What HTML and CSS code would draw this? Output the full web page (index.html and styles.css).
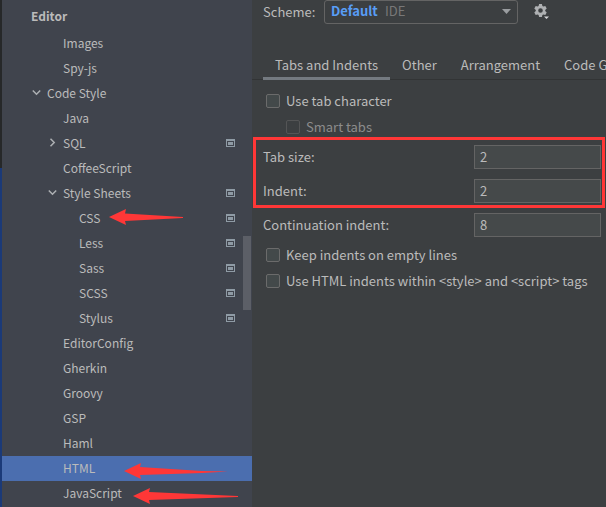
FILE: index.html
```html
<!DOCTYPE html>
<html lang="en">
<head>
<meta charset="utf-8">
<title>Settings - Code Style - HTML</title>
<link rel="stylesheet" href="styles.css">
</head>
<body>
<svg class="symbols" aria-hidden="true">
  <symbol id="down" viewBox="0 0 9 9"><path d="M0.8 2.5 4.5 6.2 8.2 2.5" fill="none" stroke="#adb0b3" stroke-width="1.5"/></symbol>
  <symbol id="right" viewBox="0 0 9 9"><path d="M2.5 0.8 6.2 4.5 2.5 8.2" fill="none" stroke="#adb0b3" stroke-width="1.5"/></symbol>
  <symbol id="project" viewBox="0 0 9 8"><path fill="#8f9ba5" fill-rule="evenodd" d="M0 0H9V8H0ZM1 2V7H8V2ZM2 3H7V6H2Z"/></symbol>
</svg>
<div class="window">
  <div class="edge"></div>
  <nav class="sidebar" aria-label="Settings">
    <a class="row heading" href="#editor">Editor</a>
    <a class="row level-2" href="#images">Images</a>
    <a class="row level-2" href="#spy">Spy-js</a>
    <a class="row level-1" href="#style"><svg class="chevron"><use href="#down"/></svg>Code Style</a>
    <a class="row level-2" href="#java">Java</a>
    <a class="row level-2" href="#sql"><svg class="chevron"><use href="#right"/></svg>SQL<svg class="project"><use href="#project"/></svg></a>
    <a class="row level-2" href="#coffee">CoffeeScript</a>
    <a class="row level-2" href="#sheets"><svg class="chevron"><use href="#down"/></svg>Style Sheets<svg class="project"><use href="#project"/></svg></a>
    <a class="row level-3" href="#css">CSS<svg class="arrow arrow-css" viewBox="0 0 75 17"><path d="M0 8 17 0 16 4.500 74 8V9L16 12 17 16Z"/></svg><svg class="project"><use href="#project"/></svg></a>
    <a class="row level-3" href="#less">Less<svg class="project"><use href="#project"/></svg></a>
    <a class="row level-3" href="#sass">Sass<svg class="project"><use href="#project"/></svg></a>
    <a class="row level-3" href="#scss">SCSS<svg class="project"><use href="#project"/></svg></a>
    <a class="row level-3" href="#stylus">Stylus<svg class="project"><use href="#project"/></svg></a>
    <a class="row level-2" href="#config">EditorConfig</a>
    <a class="row level-2" href="#gherkin">Gherkin</a>
    <a class="row level-2" href="#groovy">Groovy</a>
    <a class="row level-2" href="#gsp">GSP</a>
    <a class="row level-2" href="#haml">Haml</a>
    <a class="row level-2 selected" href="#html" aria-current="page">HTML<svg class="arrow arrow-html" viewBox="0 0 105 17"><path d="M0 8 17 0 16 4 78 8 104 8.500 78 10 16 12 17 16Z"/></svg></a>
    <a class="row level-2" href="#js">JavaScript<svg class="arrow arrow-js" viewBox="0 0 106 17"><path d="M0 8 17 0 16 4 105 8V9L16 12 17 16Z"/></svg></a>
    <div class="thumb"></div>
  </nav>
  <main class="panel">
    <div class="scheme">
      <label for="scheme">Scheme:</label>
      <div class="combo">
        <select id="scheme"><option>Default</option></select>
        <span class="scope">IDE</span>
        <svg class="caret" viewBox="0 0 9 5"><path d="M0 0H9L4.500 5Z" fill="#9a9da0"/></svg>
      </div>
      <button class="gear" type="button" aria-label="Scheme actions">
        <svg viewBox="0 0 16 16"><path fill="#afb1b3" fill-rule="evenodd" d="M5.100 0H7.900L8.400 2.100 9.400 2.600 11.300 2 12.700 4.400 11.200 5.900V7.100L12.700 8.600 11.300 11 9.400 10.400 8.400 10.900 7.900 13H5.100L4.600 10.900 3.600 10.400 1.700 11 0.300 8.600 1.800 7.100V5.900L0.300 4.400 1.700 2 3.600 2.600 4.600 2.100ZM6.500 4.200A2.300 2.300 0 1 0 6.500 8.800 2.300 2.300 0 1 0 6.500 4.200Z"/><path d="M9.500 11.500H16V14L13 16H11Z" fill="#3c3f41"/><path d="M10 12.500H15L12.500 15Z" fill="#d5d7d9"/></svg>
      </button>
    </div>
    <div class="tabs" role="tablist">
      <button class="tab active" type="button" role="tab" aria-selected="true">Tabs and Indents</button>
      <button class="tab" type="button" role="tab">Other</button>
      <button class="tab" type="button" role="tab">Arrangement</button>
      <button class="tab" type="button" role="tab">Code Generation</button>
    </div>
    <form class="options">
      <label class="check"><input type="checkbox">Use tab character</label>
      <label class="check nested"><input type="checkbox" disabled>Smart tabs</label>
      <div class="fields">
        <div class="marked">
          <div class="field"><label for="tab">Tab size:</label><input id="tab" type="text" value="2"></div>
          <div class="field"><label for="indent">Indent:</label><input id="indent" type="text" value="2"></div>
        </div>
        <div class="field"><label for="cont">Continuation indent:</label><input id="cont" type="text" value="8"></div>
      </div>
      <label class="check"><input type="checkbox">Keep indents on empty lines</label>
      <label class="check"><input type="checkbox">Use HTML indents within &lt;style&gt; and &lt;script&gt; tags</label>
    </form>
  </main>
</div>
</body>
</html>
```
FILE: styles.css
```css
* { box-sizing: border-box; }

body {
  margin: 0;
  background: #3c3f41;
  color: #bbbbbb;
  font: 13px/18px "Noto Sans CJK SC", "Noto Sans", sans-serif;
}

button, input, select { font: inherit; color: inherit; }

svg { display: block; flex: none; }

.symbols { position: absolute; width: 0; height: 0; }

.window {
  display: grid;
  grid-template-columns: 2px 250px minmax(0, 1fr);
  height: 100vh;
  overflow: hidden;
}

.edge { background: linear-gradient(#262829 168px, #1b3a78 168px); }

.sidebar {
  position: relative;
  padding-top: 4px;
  overflow: hidden;
  background: #40444d;
}

.row {
  position: relative;
  display: flex;
  align-items: center;
  height: 25px;
  padding-right: 17px;
  padding-bottom: 2px;
  color: inherit;
  font-size: 12px;
  text-decoration: none;
}

.heading { margin-bottom: 2px; padding-left: 29px; font-weight: bold; }
.level-1 { padding-left: 45px; }
.level-2 { padding-left: 61px; }
.level-3 { padding-left: 77px; }
.selected { background: #4b6eaf; }

.chevron { width: 9px; height: 9px; margin-left: -15px; margin-right: 6px; }
.project { width: 9px; height: 8px; margin-left: auto; }

.arrow { position: absolute; top: 7px; height: 17px; fill: #ff3737; }
.arrow-css { top: 3px; left: 107px; width: 75px; }
.arrow-html { left: 122px; width: 105px; }
.arrow-js { left: 131px; width: 106px; }

.thumb {
  position: absolute;
  top: 236px;
  right: 1px;
  width: 8px;
  height: 74px;
  background: #5c5f67;
}

.panel { overflow: hidden; }

.scheme { display: flex; align-items: center; height: 23px; padding-left: 11px; }
.scheme label { width: 61px; }

.combo { display: grid; align-items: center; width: 194px; height: 24px; }
.combo > * { grid-area: 1 / 1; }

.combo select {
  appearance: none;
  width: 100%;
  height: 24px;
  padding: 0 24px 2px 6px;
  border: 1px solid #646464;
  border-radius: 3px;
  background: transparent;
  color: #589df6;
  font-weight: bold;
}

.scope { margin-left: 61px; padding-bottom: 2px; color: #787878; pointer-events: none; }
.caret { width: 9px; height: 5px; justify-self: end; margin-right: 7px; pointer-events: none; }

.gear { margin-left: 16px; padding: 0; border: 0; background: none; }
.gear svg { width: 16px; height: 16px; }

.tabs {
  display: flex;
  height: 57px;
  padding: 30px 0 0 11px;
  box-shadow: inset 0 -1px #323435;
}

.tab {
  flex: none;
  padding: 0 12px;
  border: 0;
  border-bottom: 3px solid transparent;
  background: none;
  white-space: nowrap;
}

.active { border-color: #747a80; }

.options { padding-top: 8px; }

.check { display: flex; align-items: center; height: 26px; padding-left: 14px; }
.nested { padding-left: 34px; color: #8c8c8c; }

.check input {
  appearance: none;
  width: 14px;
  height: 14px;
  margin: 0 6px 0 0;
  border: 1px solid #6b6b6b;
  border-radius: 2px;
  background: #43494a;
}

.check input:disabled { border-color: #545556; background: #3c3f41; }

.fields { display: grid; gap: 10px; padding: 5px 0; }

.marked { position: relative; display: grid; gap: 10px; }

.marked::before {
  content: "";
  position: absolute;
  inset: -8px 1px -5px 1px;
  border: 3px solid #ff3737;
  pointer-events: none;
}

.field { display: flex; align-items: center; padding: 0 5px 0 11px; }
.field label { flex: 1; }

.field input {
  width: 127px;
  height: 24px;
  padding: 0 5px 2px;
  border: 1px solid #646464;
  background: #45494a;
}
```
